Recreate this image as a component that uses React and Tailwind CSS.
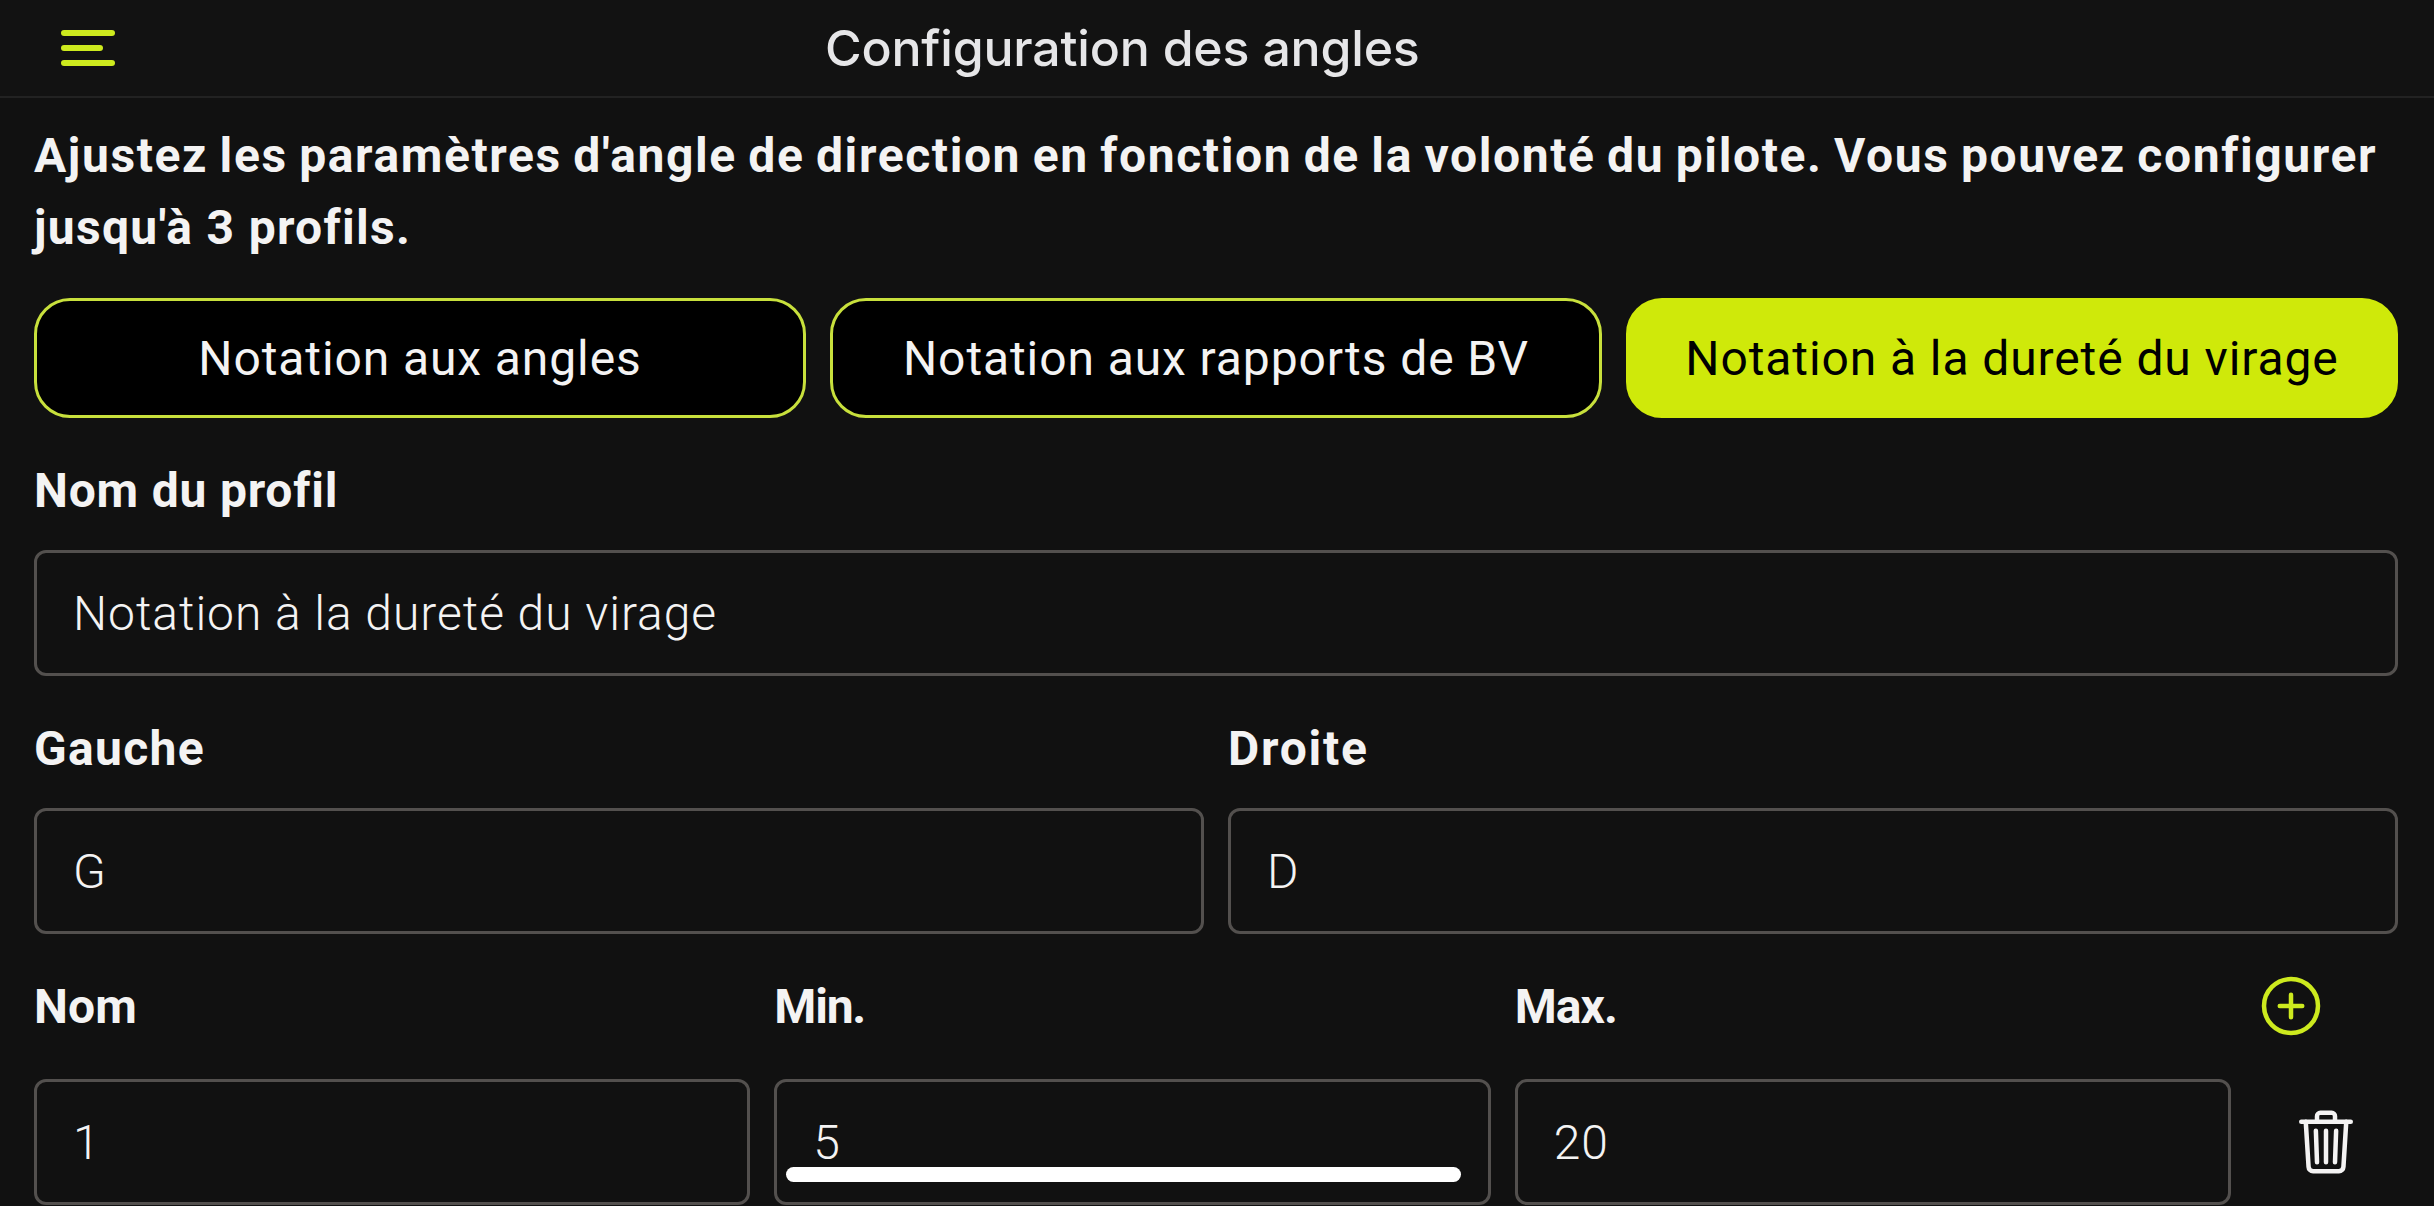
import { useState } from "react";
import { IoAddCircleOutline, IoTrashOutline } from "react-icons/io5";

// ── Données ────────────────────────────────────────────────────────────────
const PROFILS = [
  { id: "angles", nom: "Notation aux angles" },
  { id: "rapports", nom: "Notation aux rapports de BV" },
  { id: "durete", nom: "Notation à la dureté du virage" },
];

const LIGNES = [{ id: 1, nom: "1", min: "5", max: "20" }];

// ── Helpers ────────────────────────────────────────────────────────────────
function MenuIcon() {
  return (
    <svg width="56" height="38" viewBox="0 0 56 38" className="text-[#cdea1e]">
      <rect x="1" y="1" width="54" height="6" rx="3" fill="currentColor" />
      <rect x="1" y="16" width="42" height="6" rx="3" fill="currentColor" />
      <rect x="1" y="31" width="54" height="6" rx="3" fill="currentColor" />
    </svg>
  );
}

function Label({ children, className = "tracking-[1px]" }) {
  return (
    <label
      className={`block h-[72px] leading-[74px] font-bold whitespace-nowrap ${className}`}
    >
      {children}
    </label>
  );
}

function Champ({ value, onChange }) {
  return (
    <input
      type="text"
      value={value}
      onChange={onChange}
      className="block h-[126px] w-full min-w-0 rounded-xl border-3 border-[#53504e] bg-transparent px-[36px]
                 font-[350] tracking-[0.95px] outline-none"
    />
  );
}

function OngletProfil({ profil, actif, onClick }) {
  const couleurs = actif
    ? "bg-[#cfe90a] border-[#cfe90a] text-black"
    : "bg-black border-[#c8e03c] text-[#f4f3f3]";
  return (
    <button
      onClick={onClick}
      className={`h-[120px] rounded-[36px] border-3 pt-px font-[450] tracking-[0.9px] whitespace-nowrap ${couleurs}`}
    >
      {profil.nom}
    </button>
  );
}

// ── Composant principal ────────────────────────────────────────────────────
export default function App() {
  const [actif, setActif] = useState("durete");
  const [nomProfil, setNomProfil] = useState("Notation à la dureté du virage");
  const [gauche, setGauche] = useState("G");
  const [droite, setDroite] = useState("D");
  const [lignes, setLignes] = useState(LIGNES);

  const modifier = (id, champ) => (e) =>
    setLignes(
      lignes.map((l) => (l.id === id ? { ...l, [champ]: e.target.value } : l)),
    );

  return (
    <div className="relative h-screen overflow-hidden bg-[#111111] font-['Roboto',sans-serif] text-[48px] text-[#f4f3f3]">
      {/* Barre de titre */}
      <header className="flex h-[98px] items-center border-b-2 border-[#222222] bg-[#121212] px-[60px]">
        <button className="w-[56px]">
          <MenuIcon />
        </button>
        <h1 className="ml-[709px] font-['Inter',sans-serif] text-[50px] leading-none font-medium tracking-[-0.2px] text-[#e6e6e8]">
          Configuration des angles
        </h1>
      </header>

      <main className="pt-[22px] pr-[36px] pl-[34px]">
        <p className="leading-[72px] font-bold tracking-[1.6px] whitespace-nowrap [word-spacing:-2px]">
          Ajustez les paramètres d'angle de direction en fonction de la volonté
          du pilote. Vous pouvez configurer
          <br />
          <span className="tracking-[1.3px] [word-spacing:0px]">
            jusqu'à 3 profils.
          </span>
        </p>

        {/* Choix du profil */}
        <div className="mt-[34px] grid grid-cols-3 gap-6">
          {PROFILS.map((p) => (
            <OngletProfil
              key={p.id}
              profil={p}
              actif={p.id === actif}
              onClick={() => setActif(p.id)}
            />
          ))}
        </div>

        <div className="mt-9 space-y-6">
          <Label className="tracking-[0.8px]">Nom du profil</Label>
          <Champ
            value={nomProfil}
            onChange={(e) => setNomProfil(e.target.value)}
          />
        </div>

        <div className="mt-9 grid grid-cols-2 gap-6">
          <div className="space-y-6">
            <Label className="tracking-[1.3px]">Gauche</Label>
            <Champ value={gauche} onChange={(e) => setGauche(e.target.value)} />
          </div>
          <div className="space-y-6">
            <Label className="tracking-[1.8px]">Droite</Label>
            <Champ value={droite} onChange={(e) => setDroite(e.target.value)} />
          </div>
        </div>

        {/* Tableau des notes */}
        <div className="mt-9 grid grid-cols-[1fr_1fr_1fr_143px] gap-x-6 gap-y-[37px]">
          <Label className="tracking-[0.2px]">Nom</Label>
          <Label className="tracking-[-1.2px]">Min.</Label>
          <Label className="tracking-[-0.9px]">Max.</Label>
          <button className="size-[72px] text-[#cdea1e]">
            <IoAddCircleOutline size={72} />
          </button>

          {lignes.map((l) => (
            <div key={l.id} className="contents">
              <Champ value={l.nom} onChange={modifier(l.id, "nom")} />
              <Champ value={l.min} onChange={modifier(l.id, "min")} />
              <Champ value={l.max} onChange={modifier(l.id, "max")} />
              <button className="flex items-center justify-center">
                <IoTrashOutline size={72} />
              </button>
            </div>
          ))}
        </div>
      </main>

      {/* Indicateur d'accueil */}
      <div className="absolute bottom-[24px] left-[786px] h-[15px] w-[675px] rounded-full bg-white" />
    </div>
  );
}
